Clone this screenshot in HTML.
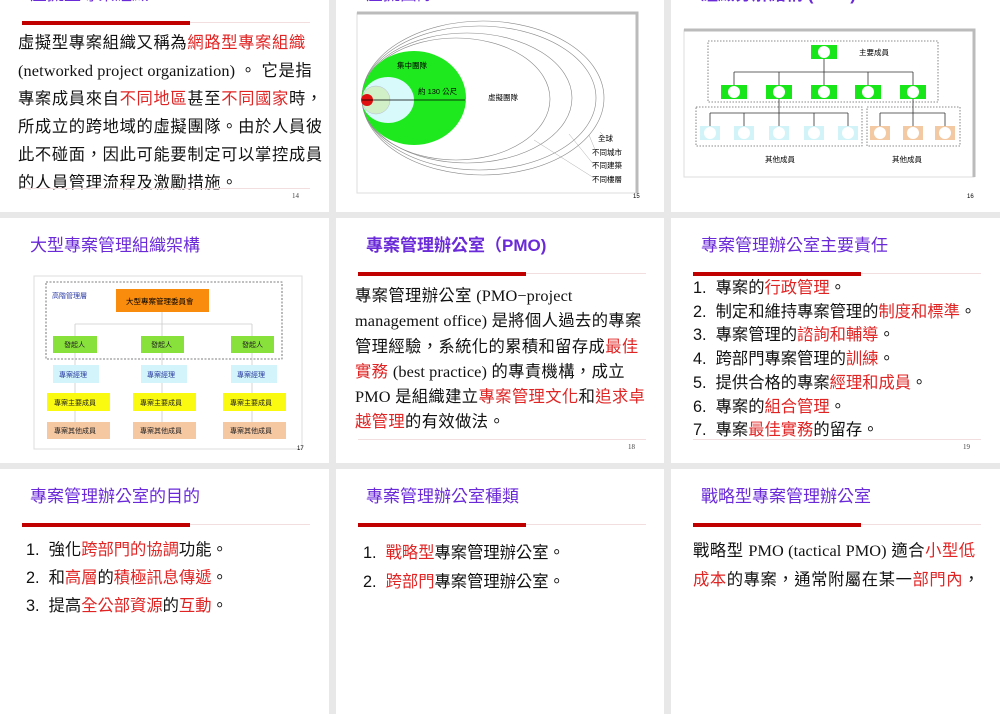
<!DOCTYPE html>
<html><head><meta charset="utf-8"><style>
*{margin:0;padding:0;box-sizing:border-box}
body{width:1000px;height:600px;background:#e8e8e8;position:relative;overflow:hidden;font-family:"Liberation Sans","Noto Sans CJK TC",sans-serif}
.c{position:absolute;width:329px;height:245px;background:#fff;overflow:hidden}
.t{position:absolute;left:30px;top:17px;font-size:17px;line-height:22px;color:#6a2ad8;white-space:nowrap}
.bar{position:absolute;left:22px;top:54px;width:168px;height:4px;background:#c00000}
.fl{position:absolute;left:22px;top:55px;width:288px;height:1px;background:#f2dede}
.bl{position:absolute;left:22px;top:221px;width:288px;height:1px;background:#f2dede}
.pn{position:absolute;left:292px;top:225px;font-size:7px;color:#444;font-family:"Liberation Serif",serif}
.b{position:absolute;font-size:16.3px;color:#111;white-space:nowrap;font-family:"Liberation Serif","Noto Sans CJK TC",sans-serif}
.r{color:#e02424}
.l{letter-spacing:0.1px}
.s{font-family:"Liberation Sans","Noto Sans CJK TC",sans-serif}
svg text{font-family:"Liberation Sans","Noto Sans CJK TC",sans-serif}
</style></head><body>

<!-- row 1 -->
<div class="c" style="left:0;top:-33px">
<div class="t">虛擬型專案組織</div><div class="fl"></div><div class="bar"></div>
<div class="b" style="left:18px;top:62px;line-height:28px;letter-spacing:0.65px">虛擬型專案組織又稱為<span class="r">網路型專案組織</span><br><span class="l">(networked project organization)</span> 。 它是指<br>專案成員來自<span class="r">不同地區</span>甚至<span class="r">不同國家</span>時，<br>所成立的跨地域的虛擬團隊。由於人員彼<br>此不碰面，因此可能要制定可以掌控成員<br>的人員管理流程及激勵措施。</div>
<div class="bl"></div><div class="pn">14</div>
</div>

<div class="c" style="left:336px;top:-33px;width:328px">
<div class="t">虛擬團隊</div>
</div>
<svg style="position:absolute;left:336px;top:0" width="328" height="212">
<rect x="21" y="13" width="280" height="180" fill="#fff" stroke="#ddd"/>
<path d="M21 13 H301 V193" fill="none" stroke="#bbb" stroke-width="3"/>
<g fill="none" stroke="#888" stroke-width="0.6">
<ellipse cx="120" cy="99" rx="94" ry="61"/>
<ellipse cx="131" cy="98" rx="105" ry="65"/>
<ellipse cx="143" cy="98" rx="117" ry="72"/>
<ellipse cx="147" cy="98" rx="121" ry="77"/>
</g>
<ellipse cx="78" cy="98" rx="52" ry="47" fill="#1ee81e"/>
<ellipse cx="52" cy="100" rx="26" ry="23" fill="#d8fafa"/>
<ellipse cx="40" cy="100" rx="14" ry="14" fill="#d2f0c8" stroke="#aac" stroke-width="0.4"/>
<circle cx="31" cy="100" r="6" fill="#e01010"/>
<line x1="26" y1="100" x2="129" y2="100" stroke="#000" stroke-width="0.8"/>
<g font-size="7.5" fill="#000">
<text x="61" y="68">集中團隊</text>
<text x="82" y="94">約 130 公尺</text>
<text x="152" y="100">虛擬團隊</text>
<text x="262" y="141">全球</text>
<text x="256" y="155">不同城市</text>
<text x="256" y="168">不同建築</text>
<text x="256" y="182">不同樓層</text>
</g>
<g stroke="#999" stroke-width="0.4"><line x1="264" y1="132" x2="270" y2="138"/><line x1="253" y1="135" x2="260" y2="152"/><line x1="233" y1="134" x2="258" y2="165"/><line x1="198" y1="140" x2="258" y2="178"/></g>
<text x="297" y="198" font-size="6">15</text>
</svg>

<div class="c" style="left:671px;top:-33px">
<div class="t" style="font-weight:bold">組織分解結構 (OBS)</div>
</div>
<svg style="position:absolute;left:671px;top:0" width="329" height="212">
<rect x="13" y="30" width="290" height="147" fill="#fff" stroke="#ddd"/>
<path d="M13 30 H303 V177" fill="none" stroke="#bbb" stroke-width="3"/>
<g fill="none" stroke="#666" stroke-width="0.8" stroke-dasharray="1.5,1.5">
<rect x="37" y="41" width="230" height="61"/><rect x="25" y="107" width="166" height="39"/><rect x="196" y="107" width="93" height="39"/>
</g>
<g stroke="#333" stroke-width="0.8" fill="none">
<path d="M153 59 V72 M63 72 H242 M63 72 V85 M108 72 V85 M153 72 V85 M197 72 V85 M242 72 V85"/>
<path d="M108 99 V126 M39 113 H177 M39 113 V126 M73 113 V126 M143 113 V126 M177 113 V126"/>
<path d="M242 99 V126 M209 113 H274 M209 113 V126 M274 113 V126"/>
</g>
<g fill="#19e619"><rect x="140" y="45" width="26" height="14"/><rect x="50" y="85" width="26" height="14"/><rect x="95" y="85" width="26" height="14"/><rect x="140" y="85" width="26" height="14"/><rect x="184" y="85" width="26" height="14"/><rect x="229" y="85" width="26" height="14"/></g>
<g fill="#d2f4f8"><rect x="29" y="126" width="20" height="14"/><rect x="63" y="126" width="20" height="14"/><rect x="98" y="126" width="20" height="14"/><rect x="133" y="126" width="20" height="14"/><rect x="167" y="126" width="20" height="14"/></g>
<g fill="#f2c9a2"><rect x="199" y="126" width="20" height="14"/><rect x="232" y="126" width="20" height="14"/><rect x="264" y="126" width="20" height="14"/></g>
<g fill="#fff"><circle cx="153" cy="52" r="6"/><circle cx="63" cy="92" r="6"/><circle cx="108" cy="92" r="6"/><circle cx="153" cy="92" r="6"/><circle cx="197" cy="92" r="6"/><circle cx="242" cy="92" r="6"/>
<circle cx="39" cy="133" r="6"/><circle cx="73" cy="133" r="6"/><circle cx="108" cy="133" r="6"/><circle cx="143" cy="133" r="6"/><circle cx="177" cy="133" r="6"/><circle cx="209" cy="133" r="6"/><circle cx="242" cy="133" r="6"/><circle cx="274" cy="133" r="6"/></g>
<g font-size="7.5" fill="#000"><text x="188" y="55">主要成員</text><text x="94" y="162">其他成員</text><text x="221" y="162">其他成員</text></g>
<text x="296" y="198" font-size="6">16</text>
</svg>

<!-- row 2 -->
<div class="c" style="left:0;top:218px">
<div class="t">大型專案管理組織架構</div>
<svg style="position:absolute;left:0;top:0" width="329" height="245">
<rect x="34" y="58" width="268" height="173" fill="#fff" stroke="#ddd"/>
<rect x="46" y="64" width="236" height="77" fill="none" stroke="#555" stroke-width="0.8" stroke-dasharray="2,1.5"/>
<g stroke="#ccc" stroke-width="0.8" fill="none"><path d="M162 94 V211 M75 106 H252 M75 106 V211 M252 106 V211"/></g>
<rect x="116" y="71" width="93" height="23" fill="#f98c0c"/>
<text x="126" y="86" font-size="7.5">大型專案管理委員會</text>
<text x="52" y="80" font-size="7" fill="#2a3aa0">高階管理層</text>
<g fill="#88e03a"><rect x="53" y="118" width="44" height="17"/><rect x="141" y="118" width="43" height="17"/><rect x="231" y="118" width="43" height="17"/></g>
<g fill="#d2f4fa"><rect x="53" y="147" width="46" height="18"/><rect x="141" y="147" width="46" height="18"/><rect x="231" y="147" width="46" height="18"/></g>
<g fill="#fafa10"><rect x="47" y="175" width="63" height="18"/><rect x="133" y="175" width="63" height="18"/><rect x="223" y="175" width="63" height="18"/></g>
<g fill="#f6c8a2"><rect x="47" y="204" width="63" height="17"/><rect x="133" y="204" width="63" height="17"/><rect x="223" y="204" width="63" height="17"/></g>
<g font-size="7" fill="#222">
<text x="64" y="129">發起人</text><text x="151" y="129">發起人</text><text x="242" y="129">發起人</text>
<text x="59" y="159" fill="#2a3aa0">專案經理</text><text x="147" y="159" fill="#2a3aa0">專案經理</text><text x="237" y="159" fill="#2a3aa0">專案經理</text>
<text x="54" y="187">專案主要成員</text><text x="140" y="187">專案主要成員</text><text x="230" y="187">專案主要成員</text>
<text x="54" y="215">專案其他成員</text><text x="140" y="215">專案其他成員</text><text x="230" y="215">專案其他成員</text>
</g>
<text x="297" y="232" font-size="6">17</text>
</svg>
</div>

<div class="c" style="left:336px;top:218px;width:328px">
<div class="t" style="font-weight:bold">專案管理辦公室（PMO)</div><div class="fl"></div><div class="bar"></div>
<div class="b" style="left:19px;top:65px;line-height:25.3px;letter-spacing:0.4px">專案管理辦公室 <span class="l">(PMO−project</span><br><span class="l">management office)</span> 是將個人過去的專案<br>管理經驗，系統化的累積和留存成<span class="r">最佳</span><br><span class="r">實務</span> <span class="l">(best practice)</span> 的專責機構，成立<br><span class="l">PMO</span> 是組織建立<span class="r">專案管理文化</span>和<span class="r">追求卓</span><br><span class="r">越管理</span>的有效做法。</div>
<div class="bl"></div><div class="pn">18</div>
</div>

<div class="c" style="left:671px;top:218px">
<div class="t">專案管理辦公室主要責任</div><div class="fl"></div><div class="bar"></div>
<div class="b s" style="left:22px;top:59px;line-height:23.7px">1.&nbsp; 專案的<span class="r">行政管理</span>。<br>2.&nbsp; 制定和維持專案管理的<span class="r">制度和標準</span>。<br>3.&nbsp; 專案管理的<span class="r">諮詢和輔導</span>。<br>4.&nbsp; 跨部門專案管理的<span class="r">訓練</span>。<br>5.&nbsp; 提供合格的專案<span class="r">經理和成員</span>。<br>6.&nbsp; 專案的<span class="r">組合管理</span>。<br>7.&nbsp; 專案<span class="r">最佳實務</span>的留存。</div>
<div class="bl"></div><div class="pn">19</div>
</div>

<!-- row 3 -->
<div class="c" style="left:0;top:469px">
<div class="t">專案管理辦公室的目的</div><div class="fl"></div><div class="bar"></div>
<div class="b s" style="left:26px;top:67px;line-height:28px">1.&nbsp; 強化<span class="r">跨部門的協調</span>功能。<br>2.&nbsp; 和<span class="r">高層</span>的<span class="r">積極訊息傳遞</span>。<br>3.&nbsp; 提高<span class="r">全公部資源</span>的<span class="r">互動</span>。</div>
</div>

<div class="c" style="left:336px;top:469px;width:328px">
<div class="t">專案管理辦公室種類</div><div class="fl"></div><div class="bar"></div>
<div class="b s" style="left:27px;top:70px;line-height:29px">1.&nbsp; <span class="r">戰略型</span>專案管理辦公室。<br>2.&nbsp; <span class="r">跨部門</span>專案管理辦公室。</div>
</div>

<div class="c" style="left:671px;top:469px">
<div class="t">戰略型專案管理辦公室</div><div class="fl"></div><div class="bar"></div>
<div class="b" style="left:22px;top:67px;line-height:29px;letter-spacing:0.6px">戰略型 <span class="l">PMO (tactical PMO)</span> 適合<span class="r">小型低</span><br><span class="r">成本</span>的專案，通常附屬在某一<span class="r">部門內</span>，</div>
</div>

</body></html>
